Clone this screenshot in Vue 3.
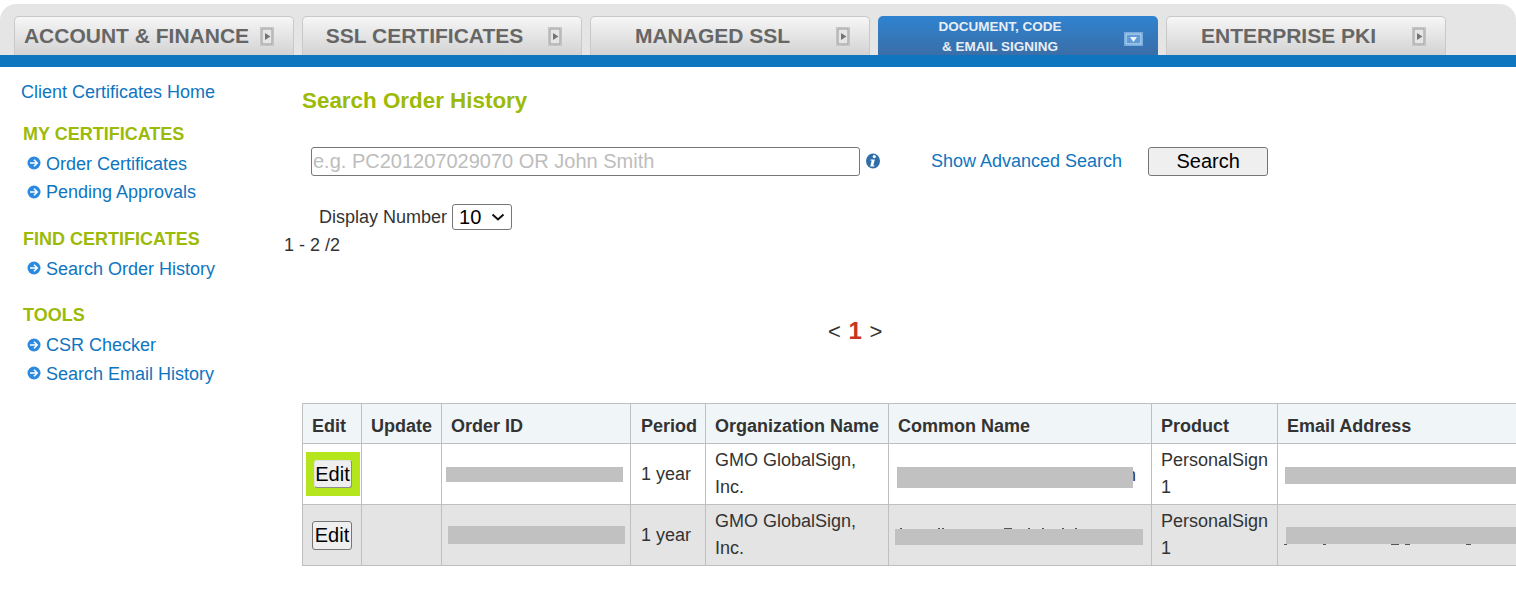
<script setup>
const tabs = [
  { label: 'ACCOUNT & FINANCE' },
  { label: 'SSL CERTIFICATES' },
  { label: 'MANAGED SSL' },
  { lines: ['DOCUMENT, CODE', '& EMAIL SIGNING'], active: true },
  { label: 'ENTERPRISE PKI' }
]
const groups = [
  { title: 'MY CERTIFICATES', links: ['Order Certificates', 'Pending Approvals'] },
  { title: 'FIND CERTIFICATES', links: ['Search Order History'] },
  { title: 'TOOLS', links: ['CSR Checker', 'Search Email History'] }
]
const nameMarks = [
  { x: 11, w: 2 }, { x: 49, w: 2 }, { x: 53, w: 2 }, { x: 115, w: 8 },
  { x: 139, w: 2 }, { x: 153, w: 2 }, { x: 173, w: 2 }, { x: 186, w: 2 }
]
const mailMarks = [
  { x: 6, w: 3 }, { x: 45, w: 3 }, { x: 113, w: 8 }, { x: 127, w: 5 }, { x: 188, w: 5 }
]
</script>

<template>
  <div class="page">
    <header class="head">
      <nav class="tabs">
        <div v-for="t in tabs" :key="t.label || 'doc'" class="tab" :class="{ active: t.active }">
          <span v-if="t.label" class="tab-label">{{ t.label }}</span>
          <span v-else class="tab-lines"><span v-for="l in t.lines" :key="l">{{ l }}</span></span>
          <svg v-if="!t.active" class="tab-icon" width="14" height="19" viewBox="0 0 14 19">
            <rect x="0.5" y="0.5" width="13" height="18" fill="#d8d8d8" stroke="#c4c4c4" />
            <rect x="2" y="2" width="10" height="15" fill="#e6e6e6" stroke="#9a9a9a" />
            <path d="M5 6l5.5 3.5L5 13z" fill="#757575" />
          </svg>
          <svg v-else class="tab-icon down" width="19" height="14" viewBox="0 0 19 14">
            <rect x="0.5" y="0.5" width="18" height="13" fill="#4a8ccb" stroke="#79aee0" />
            <rect x="2" y="2" width="15" height="10" fill="#5f9bd6" stroke="#d4e6f7" />
            <path d="M6 5h7l-3.5 5z" fill="#eef5fc" />
          </svg>
        </div>
      </nav>
      <div class="rule"></div>
    </header>

    <div class="body">
      <aside class="side">
        <a class="home">Client Certificates Home</a>
        <section v-for="g in groups" :key="g.title" class="group">
          <h3>{{ g.title }}</h3>
          <a v-for="l in g.links" :key="l" class="link">
            <svg width="14" height="14" viewBox="0 0 14 14">
              <circle cx="7" cy="7" r="6.5" fill="#2a8ae0" />
              <path d="M3 7h7M7 3.8L10.2 7 7 10.2" fill="none" stroke="#fff" stroke-width="1.6" />
            </svg>
            {{ l }}
          </a>
        </section>
      </aside>

      <main class="main">
        <h2>Search Order History</h2>
        <div class="search">
          <input class="q" placeholder="e.g. PC201207029070 OR John Smith" />
          <svg class="info" width="14" height="16" viewBox="0 0 14 16">
            <ellipse cx="7" cy="8" rx="7" ry="7.6" fill="#2f6ea8" />
            <circle cx="8.3" cy="3.6" r="1.6" fill="#fff" />
            <path d="M4.6 6.4h4.2l-1.5 6h1.3l-.3 1.2H4.2l1.5-6H4.3z" fill="#fff" />
          </svg>
          <a class="adv">Show Advanced Search</a>
          <button class="go">Search</button>
        </div>
        <div class="display">
          <label>Display Number</label>
          <select class="num"><option>10</option></select>
        </div>
        <div class="count">1 - 2 /2</div>
        <div class="pager">&lt; <b>1</b> &gt;</div>

        <table class="grid">
          <colgroup>
            <col class="w1" /><col class="w2" /><col class="w3" /><col class="w4" />
            <col class="w5" /><col class="w6" /><col class="w7" /><col class="w8" />
          </colgroup>
          <thead>
            <tr>
              <th>Edit</th><th>Update</th><th>Order ID</th><th>Period</th>
              <th>Organization Name</th><th>Common Name</th><th>Product</th><th>Email Address</th>
            </tr>
          </thead>
          <tbody>
            <tr>
              <td class="c"><span class="flash"><button class="edit">Edit</button></span></td>
              <td></td>
              <td class="red"><i class="bar b1"></i></td>
              <td>1 year</td>
              <td>GMO GlobalSign,<br />Inc.</td>
              <td class="red"><span class="tail">n</span><i class="bar b2"></i></td>
              <td>PersonalSign<br />1</td>
              <td class="red"><i class="bar b3"></i></td>
            </tr>
            <tr class="alt">
              <td class="c"><button class="edit">Edit</button></td>
              <td></td>
              <td class="red"><i class="bar b4"></i></td>
              <td>1 year</td>
              <td>GMO GlobalSign,<br />Inc.</td>
              <td class="red">
                <i v-for="m in nameMarks" :key="m.x" class="mark top" :style="{ left: m.x + 'px', width: m.w + 'px' }"></i>
                <i class="bar b5"></i>
              </td>
              <td>PersonalSign<br />1</td>
              <td class="red">
                <i v-for="m in mailMarks" :key="m.x" class="mark low" :style="{ left: m.x + 'px', width: m.w + 'px' }"></i>
                <i class="bar b6"></i>
              </td>
            </tr>
          </tbody>
        </table>
      </main>
    </div>
  </div>
</template>

<style>
html, body { margin: 0; overflow: hidden; background: #fff; }
</style>

<style scoped>
.page { width: 1516px; height: 604px; overflow: hidden; font-family: "Liberation Sans", Arial, sans-serif; font-size: 18px; color: #333; }
.head { padding-top: 4px; }
.tabs { height: 51px; box-sizing: border-box; padding: 12px 0 0 14px; display: flex; gap: 8px; background: #e5e5e5; border-radius: 16px 16px 0 0; }
.tab { width: 280px; height: 39px; box-sizing: border-box; border: 1px solid #c9c9c9; border-bottom: 0; border-radius: 5px 5px 0 0; background: linear-gradient(#f6f6f6, #d3d3d3); display: flex; align-items: center; position: relative; color: #666; font-weight: 700; font-size: 21px; }
.tab-label { flex: 1; text-align: center; padding-right: 35px; white-space: nowrap; }
.tab-icon { position: absolute; right: 19px; top: 10px; }
.tab.active { background: linear-gradient(#2f83d0, #3a6ea8); border: 0; color: #e8eef5; }
.tab-lines { flex: 1; display: flex; flex-direction: column; align-items: center; font-size: 13.5px; line-height: 20px; padding-right: 36px; padding-top: 2px; }
.tab-icon.down { right: 15px; top: 16px; }
.rule { height: 12px; background: #0f75bf; }

.body { display: flex; }
.side { width: 302px; flex: none; box-sizing: border-box; padding: 14px 0 0 21px; }
.home { display: block; font-size: 18px; line-height: 22px; color: #0f75bf; }
.group { margin-top: 20px; }
.group + .group { margin-top: 21px; }
.group:last-child { margin-top: 20px; }
.group h3 { margin: 0 0 5px 2px; font-size: 18px; line-height: 22px; color: #9cba08; font-weight: 700; }
.group:last-child h3 { margin-bottom: 6px; }
.link { display: flex; align-items: center; gap: 5px; height: 28.5px; margin-left: 6px; font-size: 18px; color: #0f75bf; }
.link svg { margin-top: -2px; }
.main { flex: 1; min-width: 0; position: relative; }
h2 { margin: 21px 0 0; font-size: 22.4px; line-height: 26px; color: #9cba08; font-weight: 700; }
.search { display: flex; align-items: center; margin: 32px 0 0 9px; height: 30px; }
.q { width: 549px; height: 29px; box-sizing: border-box; border: 1px solid #767676; border-radius: 3px; padding: 0 1px; font: 20px "Liberation Sans", Arial, sans-serif; outline: none; }
.q::placeholder { color: #bdbdbd; }
.info { margin-left: 6px; }
.adv { margin-left: 51px; color: #0f75bf; font-size: 18px; }
.go { margin-left: 26px; width: 120px; height: 29px; box-sizing: border-box; border: 1px solid #767676; border-radius: 3px; background: #efefef; font: 20px "Liberation Sans", Arial, sans-serif; color: #000; padding: 0; }
.display { display: flex; align-items: center; gap: 5px; margin: 28px 0 0 17px; height: 26px; color: #333; }
.num { width: 60px; height: 26px; box-sizing: border-box; padding: 0 0 0 6px; appearance: none; font: 20px "Liberation Sans", Arial, sans-serif; color: #000; border: 1px solid #767676; border-radius: 3px; background: #fff url("data:image/svg+xml,%3Csvg xmlns='http://www.w3.org/2000/svg' width='14' height='8'%3E%3Cpath d='M1.5 1.5L7 6.5l5.5-5' fill='none' stroke='%23111' stroke-width='2'/%3E%3C/svg%3E") no-repeat right 6px center; }
.count { margin: 4px 0 0 -18px; line-height: 22px; }
.pager { margin: 62px 0 0; padding-left: 526px; font-size: 22px; line-height: 26px; color: #333; }
.pager b { color: #c8351f; font-size: 24px; margin: 0 1.5px; }
.grid { margin-top: 58px; width: 1214px; table-layout: fixed; border-collapse: collapse; font-size: 18px; }
.w1 { width: 59px; } .w2 { width: 80px; } .w3 { width: 189px; } .w4 { width: 75px; }
.w5 { width: 183px; } .w6 { width: 263px; } .w7 { width: 126px; } .w8 { width: 239px; }
.grid th, .grid td { border: 1px solid #bfbfbf; padding: 0 9px; text-align: left; }
.grid th { height: 33px; padding-top: 6px; background: #f0f5f8; color: #333; white-space: nowrap; }
.grid td { height: 60px; line-height: 27px; position: relative; }
.grid th:nth-child(4), .grid td:nth-child(4) { padding-left: 10px; }
.grid td.c { padding: 0; text-align: center; }
.alt td { background: #e4e4e4; }
.edit { width: 40px; height: 29px; box-sizing: border-box; border: 1px solid #767676; border-radius: 3px; background: #efefef; color: #000; font: 20px "Liberation Sans", Arial, sans-serif; padding: 0; vertical-align: middle; }
.flash { display: inline-flex; align-items: center; justify-content: center; width: 54px; height: 44px; margin-left: 1px; background: #b5e61d; vertical-align: middle; }
.flash .edit { width: 38px; height: 28px; border-color: #e2e2e2 #8c8c8c #8c8c8c #e2e2e2; }
.tail { position: absolute; left: 237px; top: 18px; }
.bar { position: absolute; display: block; background: #c1c1c1; }
.mark { position: absolute; display: block; height: 1px; background: #555; }
.mark.top { top: 23px; }
.mark.low { top: 39px; }
.b1 { left: 4px; top: 23px; width: 177px; height: 15px; }
.b2 { left: 8px; top: 23px; width: 236px; height: 21px; }
.b3 { left: 7px; top: 23px; width: 240px; height: 17px; }
.b4 { left: 6px; top: 21px; width: 177px; height: 18px; }
.b5 { left: 6px; top: 24px; width: 248px; height: 16px; }
.b6 { left: 8px; top: 22px; width: 240px; height: 17px; }
</style>
